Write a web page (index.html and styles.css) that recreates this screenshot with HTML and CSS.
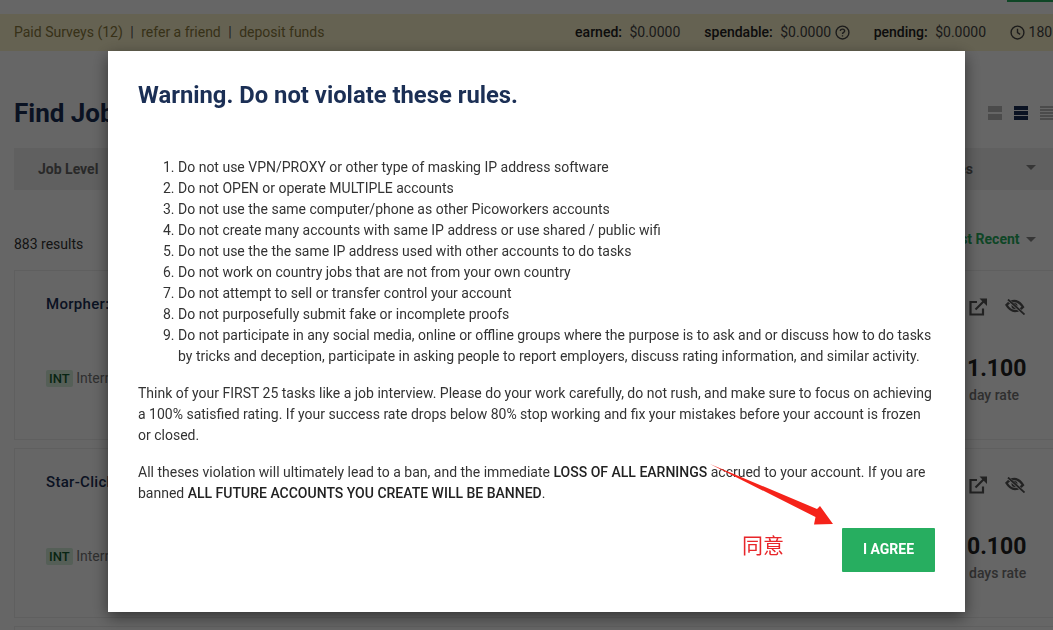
FILE: index.html
```html
<!DOCTYPE html>
<html lang="en">
<head>
  <meta charset="UTF-8" />
  <title>Find Jobs</title>
  <meta name="viewport" content="width=device-width, initial-scale=1.0" />
  <link rel="stylesheet" href="styles.css">
</head>
<body>
  <div class="page">
    <div class="top-line"><span class="top-btn"></span></div>
    <div class="stats-bar">
      <div class="stats-links">
        <span>Paid Surveys (12)</span><i>|</i><span>refer a friend</span><i>|</i><span>deposit funds</span>
      </div>
      <div class="stats">
        <span class="stat"><b>earned:</b> $0.0000</span>
        <span class="stat"><b>spendable:</b> $0.0000
          <svg class="stat-icon" viewBox="0 0 14 14"><circle cx="7" cy="7" r="6" fill="none" stroke="currentColor" stroke-width="1.300"/><path d="M5 5.6c0-1.2 1-1.8 2-1.8s2 .7 2 1.7c0 1.400-2 1.400-2 2.900M7 9.600v1.200" fill="none" stroke="currentColor" stroke-width="1.300"/></svg>
        </span>
        <span class="stat"><b>pending:</b> $0.0000</span>
        <span class="stat">
          <svg class="stat-icon" viewBox="0 0 14 14"><circle cx="7" cy="7" r="6" fill="none" stroke="currentColor" stroke-width="1.300"/><path d="M7 3.500v3.700l2.500 1.500" fill="none" stroke="currentColor" stroke-width="1.300"/></svg>
          180 hours
        </span>
      </div>
    </div>

    <div class="title-row">
      <h1>Find Jobs</h1>
      <div class="views">
        <svg viewBox="0 0 14 14"><path d="M0 0h14v6H0zM0 8h14v6H0z"/></svg>
        <svg class="active" viewBox="0 0 14 14"><path d="M0 0h14v4H0zM0 5h14v4H0zM0 10h14v4H0z"/></svg>
        <svg viewBox="0 0 14 14"><path d="M0 0h14v2H0zM0 3h14v2H0zM0 6h14v2H0zM0 9h14v2H0zM0 12h14v2H0z"/></svg>
      </div>
    </div>

    <div class="filters">
      <span class="filter-first">Job Level</span>
      <span class="filter-last">Categories</span>
      <span class="caret"></span>
    </div>

    <div class="results-row">
      <span>883 results</span>
      <span class="sort">Most Recent <span class="caret"></span></span>
    </div>

    <div class="card">
      <div class="card-main">
        <div class="card-title">Morpher: Sign up</div>
        <div class="card-tag"><span class="badge">INT</span> International</div>
      </div>
      <div class="card-side">
        <div class="card-actions">
          <svg class="icon-open" viewBox="0 0 18 18"><path d="M8 4H1.500v12.500H14V10.500" fill="none" stroke="currentColor" stroke-width="2.200"/><path d="M6.500 11.500L15.500 2.500" fill="none" stroke="currentColor" stroke-width="2.200"/><path d="M10.500 0.500H18V8z" fill="currentColor"/></svg>
          <svg class="icon-hide" viewBox="0 0 20 16"><path d="M1.500 6c2.500-2.800 5-4 8-4s6 1.800 8.500 6c-2.500 2.800-5 4-8 4S4 10.200 1.500 6z" fill="none" stroke="currentColor" stroke-width="2.400"/><circle cx="9.500" cy="7" r="3" fill="currentColor"/><path d="M2 0l17 15" stroke="#fff" stroke-width="3"/><path d="M3 0.500l16.500 15" stroke="currentColor" stroke-width="1.800"/></svg>
        </div>
        <div class="rate">1.100</div>
        <div class="rate-label">day rate</div>
      </div>
    </div>

    <div class="card">
      <div class="card-main">
        <div class="card-title">Star-Click sign up</div>
        <div class="card-tag"><span class="badge">INT</span> International</div>
      </div>
      <div class="card-side">
        <div class="card-actions">
          <svg class="icon-open" viewBox="0 0 18 18"><path d="M8 4H1.500v12.500H14V10.500" fill="none" stroke="currentColor" stroke-width="2.200"/><path d="M6.500 11.500L15.500 2.500" fill="none" stroke="currentColor" stroke-width="2.200"/><path d="M10.500 0.500H18V8z" fill="currentColor"/></svg>
          <svg class="icon-hide" viewBox="0 0 20 16"><path d="M1.500 6c2.500-2.800 5-4 8-4s6 1.800 8.500 6c-2.500 2.800-5 4-8 4S4 10.200 1.500 6z" fill="none" stroke="currentColor" stroke-width="2.400"/><circle cx="9.500" cy="7" r="3" fill="currentColor"/><path d="M2 0l17 15" stroke="#fff" stroke-width="3"/><path d="M3 0.500l16.500 15" stroke="currentColor" stroke-width="1.800"/></svg>
        </div>
        <div class="rate">0.100</div>
        <div class="rate-label">days rate</div>
      </div>
    </div>

    <div class="card"></div>
  </div>

  <div class="overlay">
    <div class="modal">
      <h2>Warning. Do not violate these rules.</h2>
      <ol>
        <li>Do not use VPN/PROXY or other type of masking IP address software</li>
        <li>Do not OPEN or operate MULTIPLE accounts</li>
        <li>Do not use the same computer/phone as other Picoworkers accounts</li>
        <li>Do not create many accounts with same IP address or use shared / public wifi</li>
        <li>Do not use the the same IP address used with other accounts to do tasks</li>
        <li>Do not work on country jobs that are not from your own country</li>
        <li>Do not attempt to sell or transfer control your account</li>
        <li>Do not purposefully submit fake or incomplete proofs</li>
        <li>Do not participate in any social media, online or offline groups where the purpose is to ask and or discuss how to do tasks by tricks and deception, participate in asking people to report employers, discuss rating information, and similar activity.</li>
      </ol>
      <p>Think of your FIRST 25 tasks like a job interview. Please do your work carefully, do not rush, and make sure to focus on achieving a 100% satisfied rating. If your success rate drops below 80% stop working and fix your mistakes before your account is frozen or closed.</p>
      <p>All theses violation will ultimately lead to a ban, and the immediate <b>LOSS OF ALL EARNINGS</b> accrued to your account. If you are banned <b>ALL FUTURE ACCOUNTS YOU CREATE WILL BE BANNED</b>.</p>
      <div class="modal-foot">
        <span class="note">同意</span>
        <button class="agree">I AGREE</button>
      </div>
      <svg class="arrow" viewBox="0 0 125 64"><path d="M0 0L107 45L110 42L123 60L104 60.500L105.500 53z" fill="#f5231a"/></svg>
    </div>
  </div>
</body>
</html>
```

FILE: styles.css
```css
html, body {
  margin: 0;
  height: 100%;
  overflow: hidden;
}
body {
  font-family: 'Roboto', sans-serif;
  font-size: 14px;
  color: #333;
  background: #fff;
}
.page {
  width: 1110px;
}
.top-line {
  height: 14px;
  display: flex;
  justify-content: flex-end;
}
.top-btn {
  width: 103px;
  height: 2px;
  background: #27ae60;
}

/* stats bar */
.stats-bar {
  height: 35px;
  background: #fdf5cd;
  display: flex;
  align-items: center;
  justify-content: space-between;
  padding: 0 19px 2px 14px;
  white-space: nowrap;
  color: #8a7a3c;
}
.stats-links i {
  font-style: normal;
  color: #555;
  margin: 0 7.5px;
}
.stats {
  display: flex;
  gap: 24px;
  color: #444;
}
.stat b {
  font-weight: 500;
  color: #222;
  margin-right: 4px;
}
.stat-icon {
  width: 15px;
  height: 15px;
  vertical-align: -3px;
}

/* heading */
.title-row {
  display: flex;
  align-items: center;
  justify-content: space-between;
  height: 70px;
  padding: 27px 56px 0 14px;
}
h1 {
  margin: 0;
  font-size: 26px;
  font-weight: 700;
  color: #1b2f55;
}
.views {
  display: flex;
  gap: 12px;
}
.views svg {
  width: 14px;
  height: 14px;
  fill: #bbb;
}
.views svg.active {
  fill: #1b2f55;
}

/* filters */
.filters {
  margin-left: 14px;
  height: 42px;
  background: #f0f0f0;
  display: flex;
  align-items: center;
  padding-left: 24px;
  font-weight: 700;
  color: #666;
}
.filter-last {
  margin-left: auto;
  margin-right: 53px;
}
.caret {
  display: inline-block;
  width: 0;
  height: 0;
  border-left: 5px solid transparent;
  border-right: 5px solid transparent;
  border-top: 5px solid #888;
  vertical-align: 2px;
}
.filters .caret {
  margin-right: 74px;
  margin-bottom: 4px;
}

.results-row {
  display: flex;
  align-items: center;
  justify-content: space-between;
  height: 52px;
  padding: 28px 74px 0 14px;
}
.sort {
  font-weight: 700;
  color: #27ae60;
  margin-top: -10px;
}
.sort .caret {
  margin-left: 3px;
}

/* job cards */
.card {
  margin-left: 14px;
  height: 168px;
  margin-bottom: 8px;
  border: 1px solid #eee;
  display: flex;
  justify-content: space-between;
  padding: 0 81px 0 31px;
}
.card-main {
  padding-top: 24px;
}
.card-title {
  font-size: 15px;
  font-weight: 500;
  color: #1b2f55;
  letter-spacing: .3px;
}
.card-tag {
  margin-top: 57px;
  color: #777;
}
.badge {
  background: #d4edda;
  color: #145c30;
  font-size: 13px;
  font-weight: 500;
  padding: 1px 3px;
  border-radius: 2px;
}
.card-side {
  width: 59px;
  padding-top: 27px;
}
.card-actions {
  display: flex;
  gap: 18px;
  align-items: center;
  color: #555;
}
.icon-open {
  width: 18px;
  height: 18px;
  flex: none;
}
.icon-hide {
  width: 20px;
  height: 16px;
  flex: none;
}
.rate {
  margin-top: 39px;
  font-size: 23px;
  font-weight: 700;
  color: #222;
  margin-left: -2px;
}
.rate-label {
  margin-top: 5px;
  color: #777;
  font-weight: 500;
  white-space: nowrap;
}

/* modal */
.overlay {
  position: fixed;
  inset: 0;
  background: rgba(0,0,0,0.6);
}
.modal {
  position: relative;
  box-sizing: border-box;
  width: 857px;
  height: 561px;
  margin: 51px 0 0 108px;
  padding: 30px;
  background: #fff;
  box-shadow: 0 5px 15px rgba(0,0,0,0.5);
  line-height: 21px;
}
h2 {
  margin: 0 0 48px;
  font-size: 23.8px;
  line-height: 28px;
  font-weight: 700;
  color: #1b2f55;
}
ol {
  margin: 0 0 16px;
  padding-left: 40px;
}
p {
  margin: 0 0 16px;
}
.modal b {
  font-weight: 500;
  color: #222;
}
.modal-foot {
  display: flex;
  justify-content: flex-end;
  align-items: center;
  margin-top: 24px;
}
.note {
  font-family: 'Noto Sans CJK SC', sans-serif;
  font-size: 21px;
  color: #e8262a;
  margin-right: 58px;
  margin-top: -12px;
}
.agree {
  width: 93px;
  height: 44px;
  padding-bottom: 3px;
  border: none;
  border-radius: 1px;
  background: #27ae60;
  color: #fff;
  font-family: 'Roboto', sans-serif;
  font-size: 14px;
  font-weight: 700;
}
.arrow {
  position: absolute;
  left: 602px;
  top: 413px;
  width: 125px;
  height: 64px;
}
```
